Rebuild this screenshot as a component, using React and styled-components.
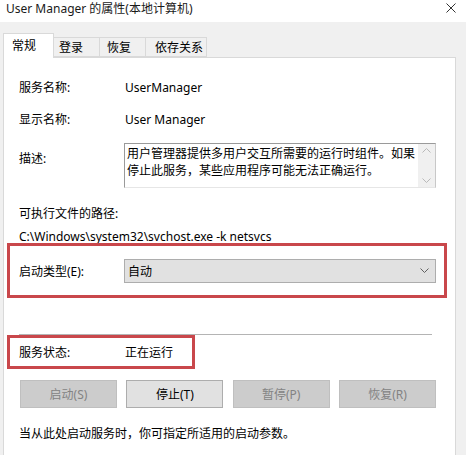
import styled, { createGlobalStyle } from 'styled-components';

const GlobalStyle = createGlobalStyle`
   html, body {
      margin: 0;
      padding: 0;
      background: #f0f0f0;
   }
   body {
      width: 466px;
      height: 455px;
      overflow: hidden;
      font-family: "Noto Sans", "Noto Sans CJK SC", sans-serif;
      font-size: 12px;
      color: #000;
   }
`;

const tabs = [
   { label: '常规', width: 51, pad: 8, active: true },
   { label: '登录', width: 46, pad: 5 },
   { label: '恢复', width: 46, pad: 7 },
   { label: '依存关系', width: 61, pad: 9 },
];

const buttons = [
   { label: '启动(S)', disabled: true },
   { label: '停止(T)' },
   { label: '暂停(P)', disabled: true },
   { label: '恢复(R)', disabled: true },
];

function Chevron({ up }) {
   return (
      <svg width="9" height="5" viewBox="0 0 9 5">
         <polyline
            points={up ? '0.5,4.5 4.5,0.5 8.5,4.5' : '0.5,0.5 4.5,4.5 8.5,0.5'}
            fill="none"
            stroke="currentColor"
            strokeWidth="1"
         />
      </svg>
   );
}

function App() {
   return (
      <Window>
         <GlobalStyle />
         <TitleBar>
            <Title>User Manager 的属性(本地计算机)</Title>
            <Close>
               <svg width="10" height="10" viewBox="0 0 10 10">
                  <path d="M0.5 0.5 L9.5 9.5 M9.5 0.5 L0.5 9.5" stroke="#333" strokeWidth="1" />
               </svg>
            </Close>
         </TitleBar>

         <TabStrip>
            {tabs.map((t) => (
               <Tab key={t.label} $active={t.active} $width={t.width} $pad={t.pad}>
                  {t.label}
               </Tab>
            ))}
         </TabStrip>

         <Panel>
            <Row $top={17}>
               <Label>服务名称:</Label>
               <Value>UserManager</Value>
            </Row>
            <Row $top={8}>
               <Label>显示名称:</Label>
               <Value>User Manager</Value>
            </Row>
            <DescRow>
               <DescLabel>描述:</DescLabel>
               <TextBox>
                  <TextBody>
                     用户管理器提供多用户交互所需要的运行时组件。如果停止此服务，某些应用程序可能无法正确运行。
                  </TextBody>
                  <ScrollBar>
                     <Chevron up />
                     <Chevron />
                  </ScrollBar>
               </TextBox>
            </DescRow>

            <PathLabel>可执行文件的路径:</PathLabel>
            <PathText>C:\Windows\system32\svchost.exe -k netsvcs</PathText>

            <Highlight $height={55} $right={-11}>
               <Label>启动类型(E):</Label>
               <Select>
                  <span>自动</span>
                  <SelectArrow>
                     <Chevron />
                  </SelectArrow>
               </Select>
            </Highlight>

            <Separator />

            <Highlight $height={34} $width={188}>
               <Label>服务状态:</Label>
               <Value>正在运行</Value>
            </Highlight>

            <ButtonRow>
               {buttons.map((b) => (
                  <Button key={b.label} disabled={b.disabled}>
                     {b.label}
                  </Button>
               ))}
            </ButtonRow>

            <Footer>当从此处启动服务时，你可指定所适用的启动参数。</Footer>
         </Panel>
      </Window>
   );
}

export default App;

const Window = styled.div`
   width: 466px;
   height: 455px;
   display: flex;
   flex-direction: column;
   background: #f0f0f0;
`;

const TitleBar = styled.div`
   height: 22px;
   background: #fff;
   display: flex;
   align-items: flex-start;
   justify-content: space-between;
   padding: 0 10px 0 6px;
   box-sizing: border-box;
`;

const Title = styled.div`
   line-height: 18px;
   color: #1a1a1a;
`;

const Close = styled.div`
   padding-top: 3px;
   display: flex;
`;

const TabStrip = styled.div`
   display: flex;
   align-items: flex-end;
   padding: 11px 0 0 3px;
   position: relative;
   z-index: 1;
`;

const Tab = styled.div`
   width: ${(p) => p.$width}px;
   height: ${(p) => (p.$active ? 25 : 20)}px;
   box-sizing: border-box;
   padding-left: ${(p) => p.$pad}px;
   line-height: ${(p) => (p.$active ? 23 : 19)}px;
   background: ${(p) => (p.$active ? '#fff' : '#f0f0f0')};
   border: 1px solid #d9d9d9;
   border-bottom: ${(p) => (p.$active ? 'none' : '1px solid #d9d9d9')};
   border-left: ${(p) => (p.$active ? '1px solid #d9d9d9' : 'none')};
   margin-bottom: ${(p) => (p.$active ? -1 : 0)}px;
`;

const Panel = styled.div`
   flex: 1;
   margin: 0 10px 0 3px;
   background: #fff;
   border: 1px solid #d9d9d9;
   border-bottom: none;
   display: flex;
   flex-direction: column;
   padding: 0 19px 0 15px;
`;

const Row = styled.div`
   display: flex;
   align-items: center;
   height: 24px;
   margin-top: ${(p) => p.$top}px;
`;

const Label = styled.div`
   width: 105px;
   flex-shrink: 0;
`;

const Value = styled.div`
   padding-left: 1px;
`;

const DescRow = styled.div`
   display: flex;
   margin-top: 12px;
`;

const DescLabel = styled(Label)`
   line-height: 16px;
   margin-top: 8px;
`;

const TextBox = styled.div`
   flex: 1;
   height: 45px;
   box-sizing: border-box;
   border: 1px solid #9a9a9a;
   border-right-color: #c8c8c8;
   border-bottom-color: #e6e6e6;
   display: flex;
`;

const TextBody = styled.div`
   flex: 1;
   padding: 1px 2px 0 2px;
   line-height: 17px;
`;

const ScrollBar = styled.div`
   width: 17px;
   background: #f0f0f0;
   color: #b9b9b9;
   display: flex;
   flex-direction: column;
   align-items: center;
   justify-content: space-between;
   padding: 4px 0 4px;
`;

const PathLabel = styled.div`
   line-height: 16px;
   margin-top: 18px;
`;

const PathText = styled.div`
   line-height: 13px;
   margin-top: 8px;
   white-space: nowrap;
`;

const Highlight = styled.div`
   display: flex;
   align-items: center;
   box-sizing: border-box;
   height: ${(p) => p.$height}px;
   width: ${(p) => (p.$width ? `${p.$width}px` : 'auto')};
   margin: 0 ${(p) => p.$right || 0}px 0 -12px;
   padding: 0 8px 0 9px;
   border: 3px solid #c9474b;
`;

const Select = styled.div`
   flex: 1;
   height: 24px;
   box-sizing: border-box;
   background: #e1e1e1;
   border: 1px solid #adadad;
   display: flex;
   align-items: center;
   justify-content: space-between;
   padding: 0 6px 0 3px;
`;

const SelectArrow = styled.div`
   display: flex;
   color: #606060;
`;

const Separator = styled.div`
   height: 1px;
   background: #b4b4b4;
   margin: 36px 4px 0 0;
`;

const ButtonRow = styled.div`
   display: flex;
   justify-content: space-between;
   margin-top: 11px;
   padding-left: 1px;
`;

const Button = styled.button`
   width: 97px;
   height: 28px;
   font: inherit;
   background: ${(p) => (p.disabled ? '#cccccc' : '#e1e1e1')};
   border: 1px solid ${(p) => (p.disabled ? '#bfbfbf' : '#adadad')};
   color: ${(p) => (p.disabled ? '#838383' : '#000')};
   padding: 0;
`;

const Footer = styled.div`
   line-height: 16px;
   margin-top: 18px;
`;
